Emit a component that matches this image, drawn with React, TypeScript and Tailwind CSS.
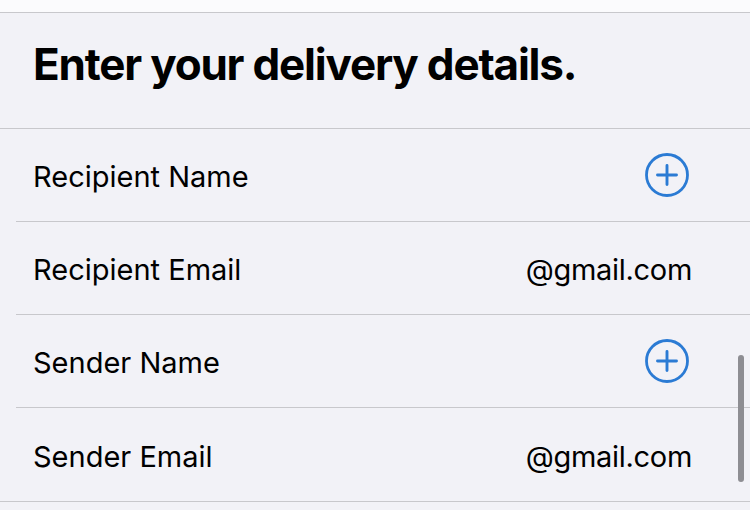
import React from 'react';

function PlusCircle() {
  return (
    <svg width="46" height="46" viewBox="0 0 46 46" fill="none">
      <circle cx="23" cy="23" r="20.5" stroke="#2b7bd4" strokeWidth="2.8" />
      <path d="M23 13.5v19M13.5 23h19" stroke="#2b7bd4" strokeWidth="2.9" strokeLinecap="round" />
    </svg>
  );
}

const rows = [
  { label: 'Recipient Name', value: null },
  { label: 'Recipient Email', value: '@gmail.com' },
  { label: 'Sender Name', value: null },
  { label: 'Sender Email', value: '@gmail.com' },
];

export default function App() {
  return (
    <div
      className="relative w-[750px] h-[510px] overflow-hidden bg-[#f2f2f7] text-black"
      style={{ fontFamily: 'Inter, "Liberation Sans", sans-serif' }}
    >
      <div className="h-[13px] bg-[#fbfbfd] border-b border-[#c8c8cc]" />
      <div className="h-[116px] flex items-center px-[33px] border-b border-[#c8c8cc]">
        <h1 className="text-[44px] font-bold tracking-[-1.2px] leading-none pb-[14px]">
          Enter your delivery details.
        </h1>
      </div>
      <div className="pl-4">
        {rows.map((row, i) => (
          <div
            key={row.label}
            className={
              i === rows.length - 1
                ? 'h-[93px] flex items-center justify-between pl-[17px] pr-[58px] pt-[3px]'
                : 'h-[93px] flex items-center justify-between pl-[17px] pr-[58px] pt-[3px] border-b border-[#c8c8cc]'
            }
          >
            <span className="text-[29px] leading-none">{row.label}</span>
            {row.value ? (
              <span className="text-[29px] leading-none tracking-[-0.3px]">{row.value}</span>
            ) : (
              <span className="mr-[2px] -mt-[3px]">
                <PlusCircle />
              </span>
            )}
          </div>
        ))}
      </div>
      <div className="border-t border-[#c8c8cc]" />
      <div className="absolute right-[6px] top-[355px] w-[6px] h-[127px] rounded-full bg-[#8e8e93]" />
    </div>
  );
}
